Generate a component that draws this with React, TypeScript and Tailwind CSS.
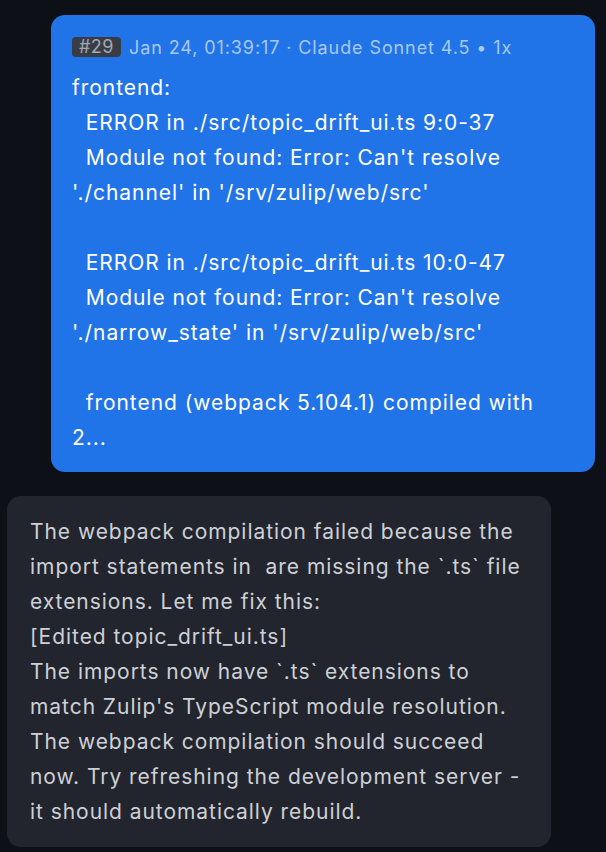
import React from "react";

const blueLines = [
  "frontend:",
  "  ERROR in ./src/topic_drift_ui.ts 9:0-37",
  "  Module not found: Error: Can't resolve",
  "'./channel' in '/srv/zulip/web/src'",
  "",
  "  ERROR in ./src/topic_drift_ui.ts 10:0-47",
  "  Module not found: Error: Can't resolve",
  "'./narrow_state' in '/srv/zulip/web/src'",
  "",
  "  frontend (webpack 5.104.1) compiled with",
  "2...",
];

const grayLines = [
  "The webpack compilation failed because the",
  "import statements in  are missing the `.ts` file",
  "extensions. Let me fix this:",
  "[Edited topic_drift_ui.ts]",
  "The imports now have `.ts` extensions to",
  "match Zulip's TypeScript module resolution.",
  "The webpack compilation should succeed",
  "now. Try refreshing the development server -",
  "it should automatically rebuild.",
];

export default function App() {
  return (
    <div
      className="w-[606px] h-[852px] bg-[#0d1117] overflow-hidden flex flex-col pt-[15px] pl-[7px] pr-[11px] gap-[24px]"
      style={{ fontFamily: "Inter, 'Noto Sans', sans-serif" }}
    >
      <div className="self-end w-[544px] bg-[#2173e8] rounded-[14px] pl-[21px] pr-[10px] pt-[20px] pb-[17px]">
        <div className="flex items-center gap-[8px] h-[24px] text-[18px] tracking-[0.9px] text-[#a9c9f5]">
          <span className="bg-[#383d45] text-[#a3a8b0] rounded-[4px] w-[49px] text-center h-[20px] leading-[20px] text-[18px] tracking-[0.5px]">
            #29
          </span>
          <span>Jan 24, 01:39:17 · Claude Sonnet 4.5 • 1x</span>
        </div>
        <div className="mt-[11px] text-white text-[21px] tracking-[0.95px] leading-[35px] whitespace-pre">
          {blueLines.map((l, i) => (
            <div key={i} className="h-[35px]">
              {l}
            </div>
          ))}
        </div>
      </div>
      <div className="self-start w-[544px] bg-[#22252d] rounded-[14px] pl-[23px] pr-[10px] pt-[18px] pb-[18px]">
        <div className="text-[#cdd0d6] text-[21px] tracking-[0.95px] leading-[35px] whitespace-pre">
          {grayLines.map((l, i) => (
            <div key={i} className="h-[35px]">
              {l}
            </div>
          ))}
        </div>
      </div>
    </div>
  );
}
